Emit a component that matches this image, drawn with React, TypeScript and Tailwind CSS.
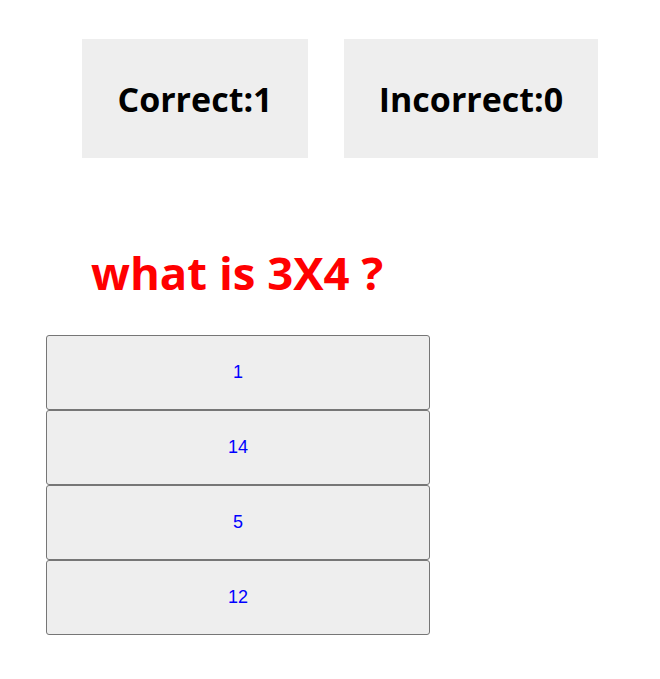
export default function App() {
  const options = ['1', '14', '5', '12'];

  return (
    <div className="min-h-[679px] w-[660px] bg-white font-['Open_Sans',sans-serif]">
      <div className="flex gap-[36px] pt-[39px] pl-[82px]">
        <div className="flex h-[119px] w-[226px] items-center justify-center bg-[#eeeeee] pt-[2px] text-[34px] font-bold text-black">
          Correct:1
        </div>
        <div className="flex h-[119px] w-[254px] items-center justify-center bg-[#eeeeee] pt-[2px] text-[34px] font-bold text-black">
          Incorrect:0
        </div>
      </div>

      <h1 className="mt-[86px] pl-[91px] text-[45.5px] leading-[56px] font-bold text-[#ff0000]">
        what is 3X4 ?
      </h1>

      <div className="mt-[35px] ml-[46px] flex w-[384px] flex-col">
        {options.map((opt) => (
          <button
            key={opt}
            className="h-[75px] w-full rounded-[3px] border border-[#767676] bg-[#eeeeee] font-['Liberation_Sans',Arial,sans-serif] text-[18px] text-[#0000ff]"
          >
            {opt}
          </button>
        ))}
      </div>
    </div>
  );
}
